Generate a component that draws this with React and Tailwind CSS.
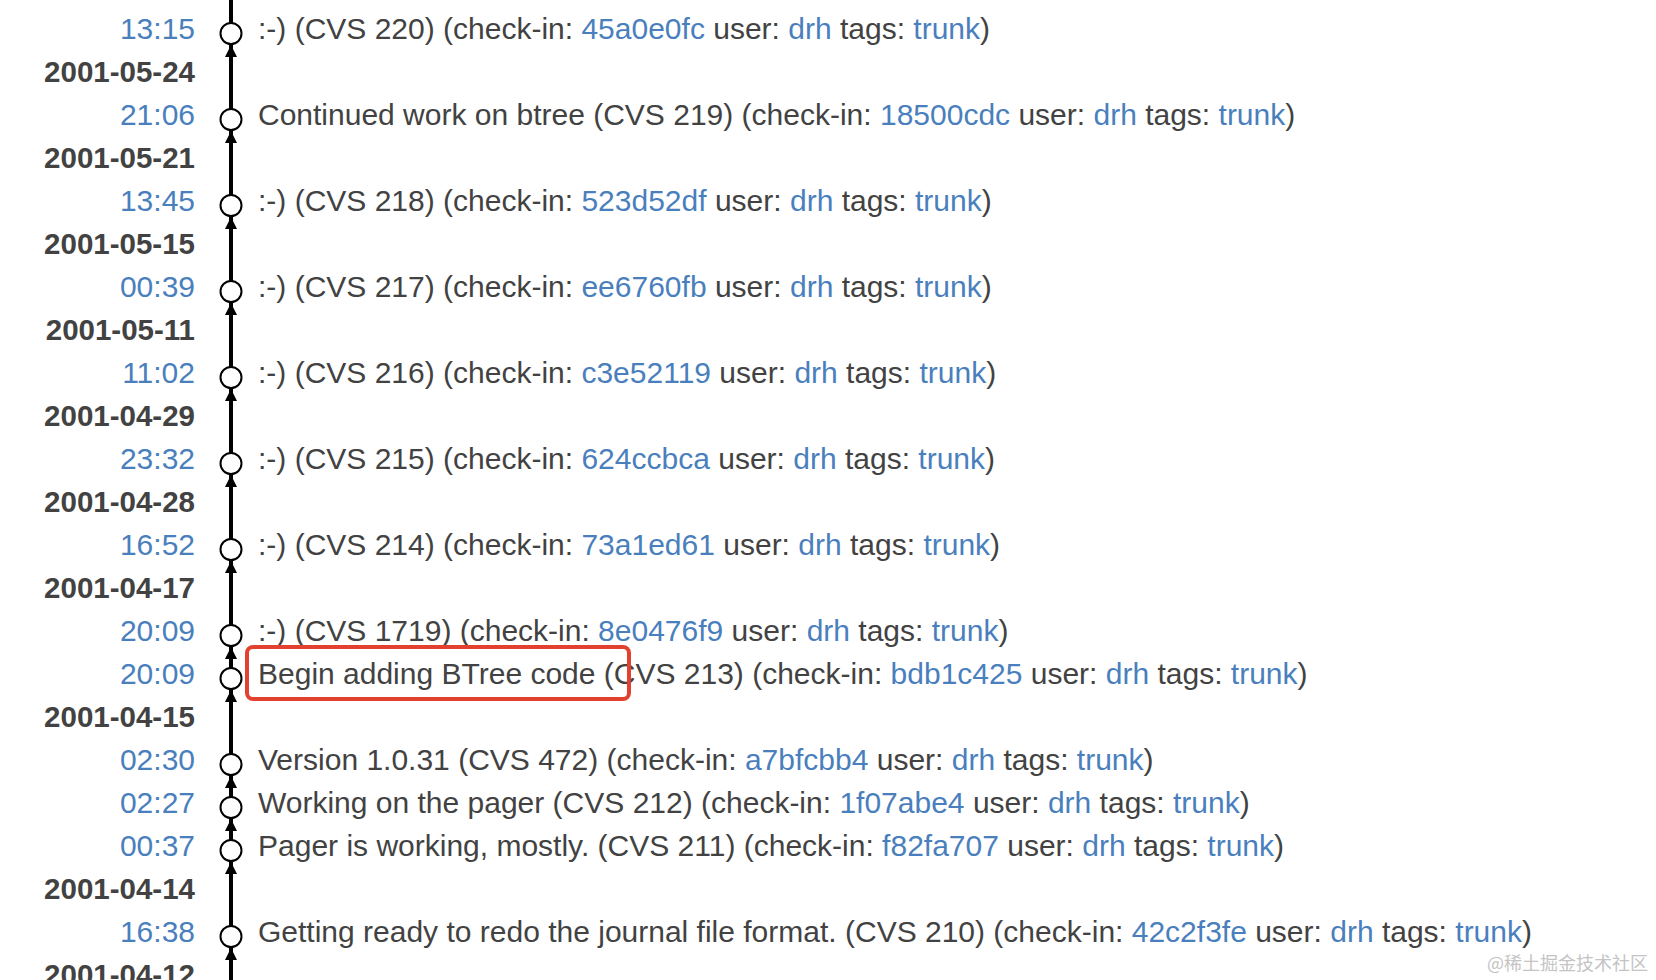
import React from "react";

const rows = [
  { t: "13:15", m: ":-) (CVS 220)", h: "45a0e0fc" },
  { d: "2001-05-24" },
  { t: "21:06", m: "Continued work on btree (CVS 219)", h: "18500cdc" },
  { d: "2001-05-21" },
  { t: "13:45", m: ":-) (CVS 218)", h: "523d52df" },
  { d: "2001-05-15" },
  { t: "00:39", m: ":-) (CVS 217)", h: "ee6760fb" },
  { d: "2001-05-11" },
  { t: "11:02", m: ":-) (CVS 216)", h: "c3e52119" },
  { d: "2001-04-29" },
  { t: "23:32", m: ":-) (CVS 215)", h: "624ccbca" },
  { d: "2001-04-28" },
  { t: "16:52", m: ":-) (CVS 214)", h: "73a1ed61" },
  { d: "2001-04-17" },
  { t: "20:09", m: ":-) (CVS 1719)", h: "8e0476f9" },
  { t: "20:09", m: "Begin adding BTree code (CVS 213)", h: "bdb1c425" },
  { d: "2001-04-15" },
  { t: "02:30", m: "Version 1.0.31 (CVS 472)", h: "a7bfcbb4" },
  { t: "02:27", m: "Working on the pager (CVS 212)", h: "1f07abe4" },
  { t: "00:37", m: "Pager is working, mostly. (CVS 211)", h: "f82fa707" },
  { d: "2001-04-14" },
  { t: "16:38", m: "Getting ready to redo the journal file format. (CVS 210)", h: "42c2f3fe" },
  { d: "2001-04-12" },
];

function Rail({ node, height = 43 }) {
  return (
    <svg width="24" height={height} className="block overflow-visible" viewBox={`0 0 24 ${height}`}>
      <line x1="12" y1="0" x2="12" y2={height} stroke="#000" strokeWidth="4" />
      {node && (
        <>
          <circle cx="12" cy="26.5" r="10.5" fill="#fff" stroke="#000" strokeWidth="2" />
          <polygon points="12,38 6,50 18,50" fill="#000" />
        </>
      )}
    </svg>
  );
}

const Link = ({ children }) => <span className="text-[#4a7fbd]">{children}</span>;

export default function App() {
  return (
    <div className="relative w-full h-[980px] overflow-hidden bg-white font-['Liberation_Sans',Arial,sans-serif] text-[30px] leading-[43px] text-[#424242]">
      <div className="flex">
        <div className="w-[195px]" />
        <div className="ml-[24px]">
          <Rail height={7} />
        </div>
      </div>
      {rows.map((r, i) => (
        <div key={i} className="flex h-[43px] whitespace-nowrap">
          <div className={`w-[195px] text-right ${r.d ? "font-bold text-[29.5px]" : "text-[#4a7fbd]"}`}>
            {r.d || r.t}
          </div>
          <div className="ml-[24px] mr-[15px] w-[24px]">
            <Rail node={!!r.t} />
          </div>
          {r.t && (
            <div>
              {r.m} (check-in: <Link>{r.h}</Link> user: <Link>drh</Link> tags: <Link>trunk</Link>)
            </div>
          )}
        </div>
      ))}
      <div className="absolute left-[245px] top-[645px] w-[386px] h-[56px] border-4 border-[#e2412f] rounded-[8px]" />
      <div className="absolute right-[8px] bottom-[6px] text-[18px] leading-[24px] text-[#c4c4c4] font-['Noto_Sans_CJK_SC',sans-serif]">
        @稀土掘金技术社区
      </div>
    </div>
  );
}
